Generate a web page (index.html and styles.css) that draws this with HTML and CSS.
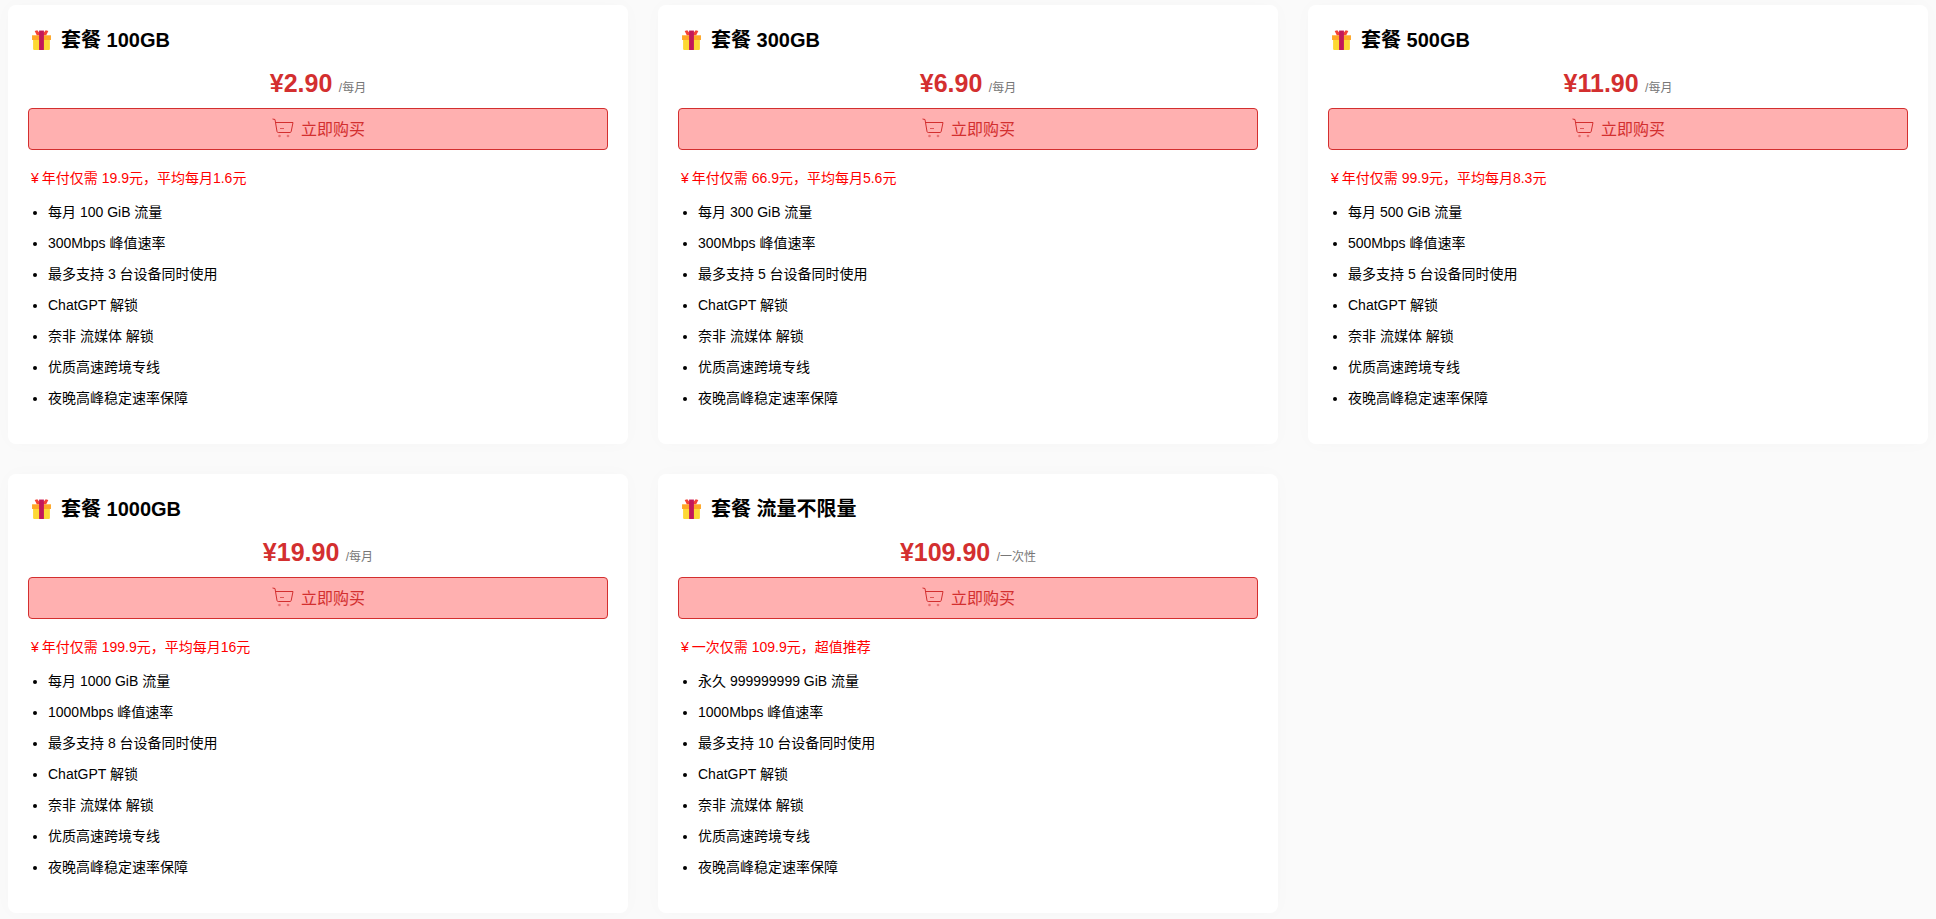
FILE: index.html
```html
<!DOCTYPE html>
<html lang="zh-CN">
<head>
<meta charset="utf-8">
<title>套餐</title>
<link rel="stylesheet" href="styles.css">
</head>
<body>
<svg class="defs" width="0" height="0" aria-hidden="true">
  <symbol id="gift" viewBox="0 0 20 20">
    <path fill="#fdd835" d="M2 8h16v10.500a1 1 0 0 1-1 1H3a1 1 0 0 1-1-1z"/>
    <path fill="#ffa726" d="M1 5.500h18V10H1z"/>
    <path fill="#f44336" d="M3.500 1.500 6 .8 10 5.500H5.500zM16.500 1.500 14 .8 10 5.500h4.500z"/>
    <path fill="#c2185b" d="M7.700 1h4.600v18.500H7.700z"/>
  </symbol>
  <symbol id="cart" viewBox="0 0 22 20">
    <path fill="none" stroke="currentColor" stroke-width="1" d="M.5 1 3 1.500 5 13.500c.1.600.5 1 1.200 1H18c.600 0 1-.3 1.200-1L21 4.500H3.500"/>
    <path fill="none" stroke="currentColor" stroke-width="1" opacity=".7" d="M8 10.500h4"/>
    <circle cx="7.500" cy="18" r="1.300" fill="currentColor" opacity=".5"/>
    <circle cx="16" cy="18" r="1.300" fill="currentColor" opacity=".5"/>
  </symbol>
</svg>
<main class="grid">
  <article class="card">
    <h2 class="title"><svg class="gift"><use href="#gift"/></svg>套餐 100GB</h2>
    <p class="price"><span class="amount">¥2.90</span> <span class="unit">/每月</span></p>
    <button class="buy"><svg class="cart"><use href="#cart"/></svg>立即购买</button>
    <p class="note"><span class="yen">¥</span>年付仅需 19.9元，平均每月1.6元</p>
    <ul class="features">
      <li>每月 100 GiB 流量</li><li>300Mbps 峰值速率</li><li>最多支持 3 台设备同时使用</li><li>ChatGPT 解锁</li><li>奈非 流媒体 解锁</li><li>优质高速跨境专线</li><li>夜晚高峰稳定速率保障</li>
    </ul>
  </article>
  <article class="card">
    <h2 class="title"><svg class="gift"><use href="#gift"/></svg>套餐 300GB</h2>
    <p class="price"><span class="amount">¥6.90</span> <span class="unit">/每月</span></p>
    <button class="buy"><svg class="cart"><use href="#cart"/></svg>立即购买</button>
    <p class="note"><span class="yen">¥</span>年付仅需 66.9元，平均每月5.6元</p>
    <ul class="features">
      <li>每月 300 GiB 流量</li><li>300Mbps 峰值速率</li><li>最多支持 5 台设备同时使用</li><li>ChatGPT 解锁</li><li>奈非 流媒体 解锁</li><li>优质高速跨境专线</li><li>夜晚高峰稳定速率保障</li>
    </ul>
  </article>
  <article class="card">
    <h2 class="title"><svg class="gift"><use href="#gift"/></svg>套餐 500GB</h2>
    <p class="price"><span class="amount">¥11.90</span> <span class="unit">/每月</span></p>
    <button class="buy"><svg class="cart"><use href="#cart"/></svg>立即购买</button>
    <p class="note"><span class="yen">¥</span>年付仅需 99.9元，平均每月8.3元</p>
    <ul class="features">
      <li>每月 500 GiB 流量</li><li>500Mbps 峰值速率</li><li>最多支持 5 台设备同时使用</li><li>ChatGPT 解锁</li><li>奈非 流媒体 解锁</li><li>优质高速跨境专线</li><li>夜晚高峰稳定速率保障</li>
    </ul>
  </article>
  <article class="card">
    <h2 class="title"><svg class="gift"><use href="#gift"/></svg>套餐 1000GB</h2>
    <p class="price"><span class="amount">¥19.90</span> <span class="unit">/每月</span></p>
    <button class="buy"><svg class="cart"><use href="#cart"/></svg>立即购买</button>
    <p class="note"><span class="yen">¥</span>年付仅需 199.9元，平均每月16元</p>
    <ul class="features">
      <li>每月 1000 GiB 流量</li><li>1000Mbps 峰值速率</li><li>最多支持 8 台设备同时使用</li><li>ChatGPT 解锁</li><li>奈非 流媒体 解锁</li><li>优质高速跨境专线</li><li>夜晚高峰稳定速率保障</li>
    </ul>
  </article>
  <article class="card">
    <h2 class="title"><svg class="gift"><use href="#gift"/></svg>套餐 流量不限量</h2>
    <p class="price"><span class="amount">¥109.90</span> <span class="unit">/一次性</span></p>
    <button class="buy"><svg class="cart"><use href="#cart"/></svg>立即购买</button>
    <p class="note"><span class="yen">¥</span>一次仅需 109.9元，超值推荐</p>
    <ul class="features">
      <li>永久 999999999 GiB 流量</li><li>1000Mbps 峰值速率</li><li>最多支持 10 台设备同时使用</li><li>ChatGPT 解锁</li><li>奈非 流媒体 解锁</li><li>优质高速跨境专线</li><li>夜晚高峰稳定速率保障</li>
    </ul>
  </article>
</main>
</body>
</html>
```

FILE: styles.css
```css
html, body {
  margin: 0;
  height: 100%;
  overflow: hidden;
}
body {
  background: #fafafa;
  color: #000;
  font-family: "Liberation Sans", "Noto Sans CJK SC", sans-serif;
}
.defs { display: block; }
.grid {
  display: grid;
  grid-template-columns: repeat(3, 620px);
  gap: 30px;
  padding: 5px 8px 0;
}
.card {
  background: #fff;
  border-radius: 8px;
  padding: 20px 20px 24px;
  height: 439px;
  box-sizing: border-box;
  box-shadow: 0 0 20px rgba(0, 0, 0, 0.02);
}
.title {
  display: flex;
  align-items: center;
  margin: 0;
  height: 30px;
  font-size: 20px;
  font-weight: 700;
  line-height: 30px;
}
.gift {
  width: 21px;
  height: 22px;
  margin: 0 9px 0 3px;
  flex: none;
}
.price {
  margin: 11px 0 8px;
  text-align: center;
  line-height: 34px;
  height: 34px;
}
.amount {
  font-size: 25px;
  font-weight: 700;
  color: #d32f2f;
}
.unit {
  font-size: 12px;
  color: #777;
  margin-left: 2px;
}
.buy {
  display: flex;
  align-items: center;
  justify-content: center;
  width: 100%;
  height: 42px;
  padding: 0 0 2px 1px;
  border: 1px solid #d32f2f;
  border-radius: 4px;
  background: #ffb0b0;
  color: #d32f2f;
  font: inherit;
  font-size: 16px;
}
.cart {
  width: 22px;
  height: 20px;
  margin-right: 7px;
}
.note {
  margin: 18px 0 0 3px;
  font-size: 14px;
  line-height: 20px;
  color: #f00;
}
.yen {
  margin-right: 3px;
}
.features {
  margin: 9px 0 0;
  padding: 0 0 0 20px;
  font-size: 14px;
  line-height: 31px;
}
```
